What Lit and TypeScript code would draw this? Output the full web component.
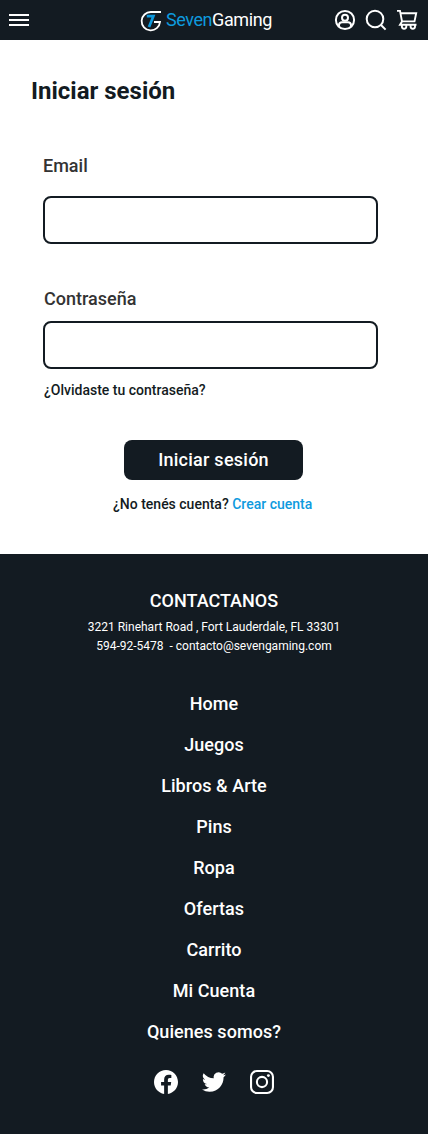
import { LitElement, html, css } from "lit";
import { customElement } from "lit/decorators.js";

const LINKS = ["Home", "Juegos", "Libros & Arte", "Pins", "Ropa", "Ofertas", "Carrito", "Mi Cuenta", "Quienes somos?"];

@customElement("site-header")
class SiteHeader extends LitElement {
  static styles = css`
    :host { display: grid; grid-template-columns: 131px auto 1fr; align-items: center; height: 40px; background: #131b22; padding: 0 9px; color: #fff; }
    .menu { display: grid; gap: 3px; width: 20px; }
    .bar { height: 2px; background: #fff; }
    .brand { display: flex; align-items: center; gap: 4px; font-size: 18px; line-height: 20px; letter-spacing: -0.42px; }
    .blue { color: #0e9ade; }
    .tools { display: flex; justify-content: flex-end; gap: 7px; }
    svg { display: block; }
  `;
  render() {
    return html`
      <div class="menu"><div class="bar"></div><div class="bar"></div><div class="bar"></div></div>
      <div class="brand">
        <svg width="22" height="24" viewBox="0 0 22 24" fill="none">
          <path d="M21 4H11A9.2 9.2 0 1 0 20 14H14" stroke="#fff" stroke-width="1.8" />
          <path d="M6.8 8.2H13.4L9 19" stroke="#0e9ade" stroke-width="2.7" />
        </svg>
        <span><span class="blue">Seven</span>Gaming</span>
      </div>
      <div class="tools">
        <svg width="24" height="24" viewBox="0 0 24 24" fill="none" stroke="#fff" stroke-width="2">
          <circle cx="12" cy="12" r="9.1" /><circle cx="12" cy="9.8" r="3" />
          <path d="M6 18.6V17a3 3 0 0 1 3-2.8h6a3 3 0 0 1 3 2.8v1.6" />
        </svg>
        <svg width="24" height="24" viewBox="0 0 24 24" fill="none" stroke="#fff" stroke-width="2">
          <circle cx="11" cy="11" r="8.3" /><path d="M17 17L21.6 21.6" />
        </svg>
        <svg width="24" height="24" viewBox="0 0 24 24" fill="none" stroke="#fff" stroke-width="1.9">
          <path d="M2 2.9H5L7 13.4H19.5L21.2 5.2H5.7M7 13.4L5 16.8H21.5" />
          <path d="M6.9 16.8V18.6a2.2 2.2 0 0 0 4.4 0V16.8M15.6 16.8V18.6a2.2 2.2 0 0 0 4.4 0V16.8" />
        </svg>
      </div>`;
  }
}

@customElement("login-form")
class LoginForm extends LitElement {
  static styles = css`
    :host { display: flex; flex-direction: column; height: 514px; box-sizing: border-box; padding: 37px 50px 0 31px; background: #fff; color: #131b22; font-weight: 500; }
    h1 { margin: 0; font-size: 24px; line-height: 28px; font-weight: 700; }
    form { display: flex; flex-direction: column; padding: 50px 0 0 12px; }
    label { font-size: 18px; line-height: 22px; color: #333; }
    .second { margin: 44px 0 0 1px; }
    input { box-sizing: border-box; width: 335px; height: 48px; border: 2px solid #131b22; border-radius: 8px; background: #fff; padding: 0 12px; margin: 19px 0 0; outline: 0; }
    .pass { margin-top: 11px; }
    .forgot { font-size: 14px; line-height: 16px; margin: 13px 0 0 1px; }
    button { width: 179px; height: 40px; margin: 42px 0 0 81px; padding: 0; border: 0; border-radius: 8px; background: #131b22; color: #fff; font: 500 18px/40px Roboto, sans-serif; letter-spacing: 0.25px; }
    .join { width: 200px; margin: 16px 0 0 70px; font-size: 14px; line-height: 16px; white-space: nowrap; }
    .blue { color: #0e9ade; }
  `;
  render() {
    return html`
      <h1>Iniciar sesión</h1>
      <form>
        <label for="email">Email</label>
        <input id="email" type="email" />
        <label class="second" for="pass">Contraseña</label>
        <input class="pass" id="pass" type="password" />
        <div class="forgot">¿Olvidaste tu contraseña?</div>
        <button type="button">Iniciar sesión</button>
        <div class="join">¿No tenés cuenta? <span class="blue">Crear cuenta</span></div>
      </form>`;
  }
}

@customElement("site-footer")
class SiteFooter extends LitElement {
  static styles = css`
    :host { display: flex; flex-direction: column; align-items: center; height: 580px; box-sizing: border-box; padding-top: 36px; background: #131b22; color: #fff; }
    .title { font-size: 18px; line-height: 22px; font-weight: 500; }
    .contact { font-size: 12px; line-height: 19px; margin-top: 6px; text-align: center; white-space: pre; }
    nav { display: flex; flex-direction: column; align-items: center; margin: 37px 0 0; font-size: 18px; line-height: 22px; font-weight: 500; letter-spacing: 0.05px; gap: 19px; }
    .social { display: flex; gap: 24px; margin-top: 27px; }
    svg { display: block; }
  `;
  render() {
    return html`
      <div class="title">CONTACTANOS</div>
      <div class="contact"><div>3221 Rinehart Road , Fort Lauderdale, FL 33301</div><div>594-92-5478  - contacto@sevengaming.com</div></div>
      <nav>${LINKS.map((l) => html`<div>${l}</div>`)}</nav>
      <div class="social">
        <svg width="24" height="24" viewBox="0 0 24 24" fill="#fff"><path d="M24 12.07C24 5.4 18.63 0 12 0S0 5.4 0 12.07c0 6.03 4.39 11.02 10.13 11.93v-8.44H7.08v-3.49h3.05V9.41c0-3.03 1.79-4.7 4.53-4.7 1.31 0 2.68.24 2.68.24v2.97h-1.51c-1.49 0-1.96.93-1.96 1.89v2.26h3.33l-.53 3.49h-2.8V24C19.61 23.09 24 18.1 24 12.07z" /></svg>
        <svg width="24" height="24" viewBox="0 0 24 24" fill="#fff"><path d="M23.95 4.57a10 10 0 0 1-2.82.77 4.96 4.96 0 0 0 2.16-2.72c-.95.56-2 .96-3.13 1.19a4.92 4.92 0 0 0-8.38 4.48A13.93 13.93 0 0 1 1.64 3.16a4.92 4.92 0 0 0 1.52 6.57 4.9 4.9 0 0 1-2.23-.61v.06a4.92 4.92 0 0 0 3.95 4.83 5 5 0 0 1-2.21.08 4.94 4.94 0 0 0 4.6 3.42A9.87 9.87 0 0 1 0 19.54a13.99 13.99 0 0 0 7.55 2.21c9.05 0 14-7.5 14-13.98 0-.21 0-.42-.02-.63a9.94 9.94 0 0 0 2.42-2.57z" /></svg>
        <svg width="24" height="24" viewBox="0 0 24 24" fill="none" stroke="#fff" stroke-width="2.1"><rect x="1.05" y="1.05" width="21.9" height="21.9" rx="5.8" /><circle cx="12" cy="12" r="5.1" /><circle cx="18.4" cy="5.6" r="1.45" fill="#fff" stroke="none" /></svg>
      </div>`;
  }
}

@customElement("app-root")
class AppRoot extends LitElement {
  static styles = css`
    :host { display: block; width: 428px; height: 1134px; font-family: Roboto, sans-serif; overflow: hidden; }
  `;
  render() {
    return html`<site-header></site-header><login-form></login-form><site-footer></site-footer>`;
  }
}
